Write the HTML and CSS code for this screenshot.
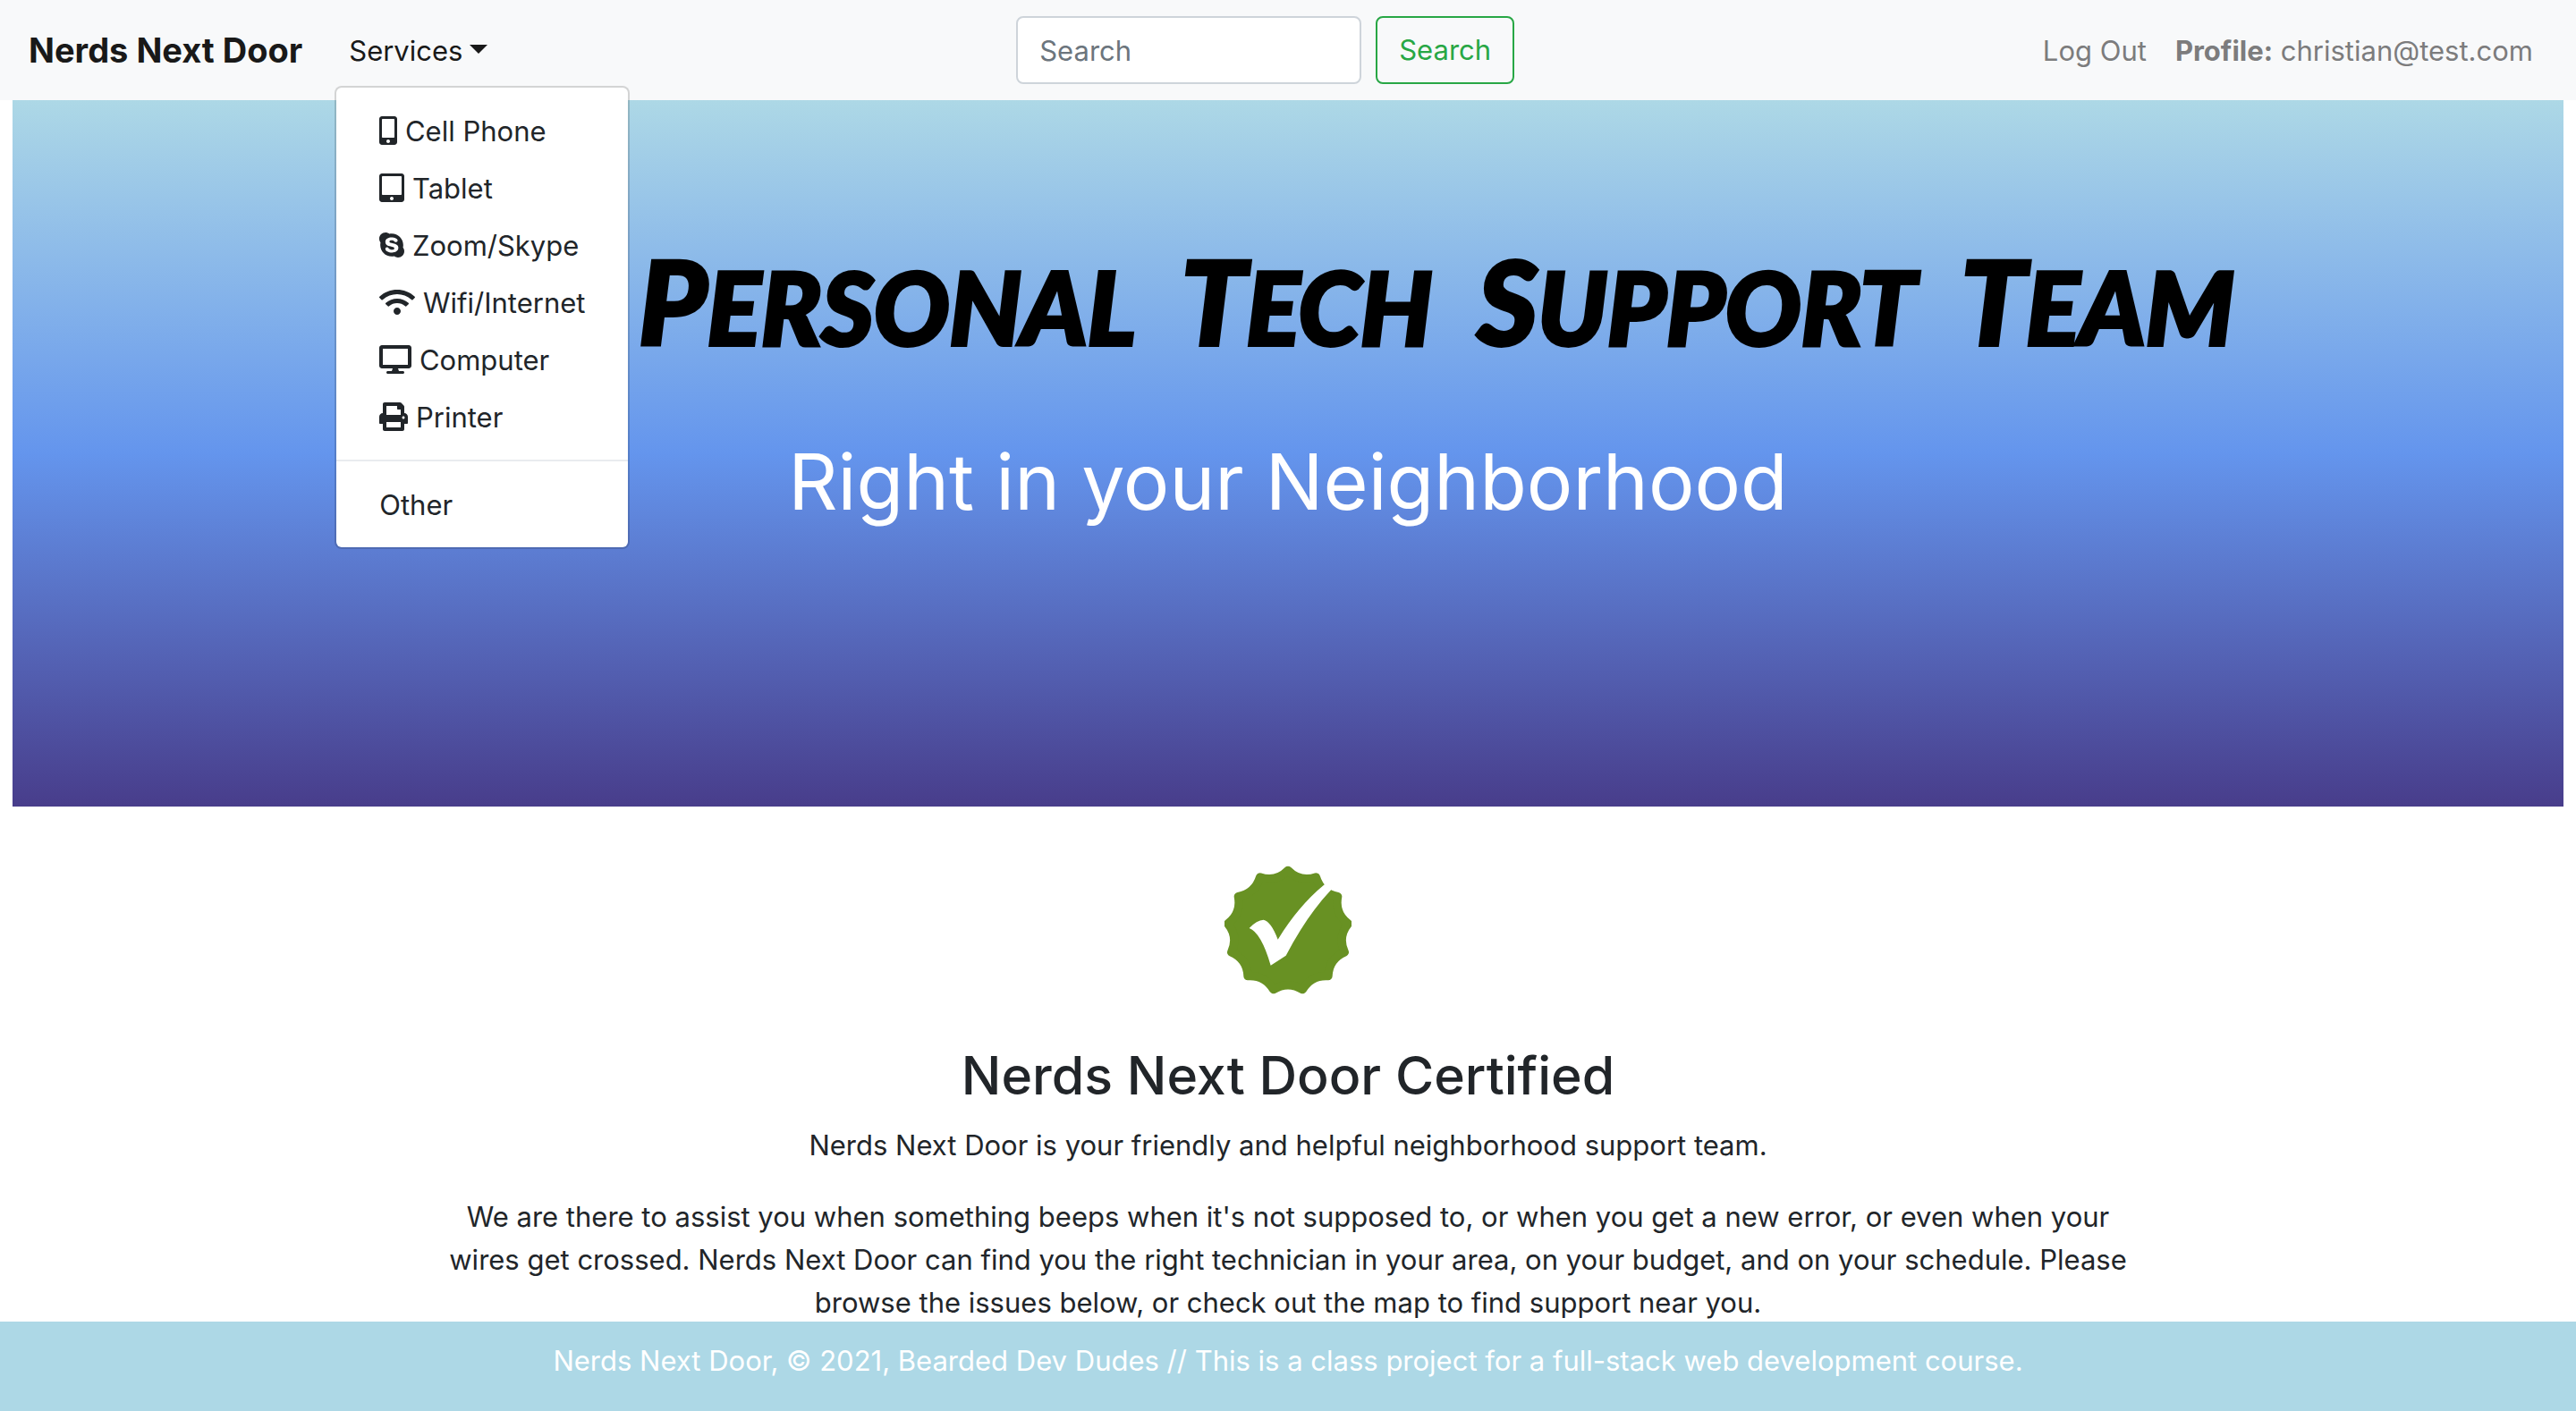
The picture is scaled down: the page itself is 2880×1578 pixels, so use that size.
FILE: index.html
```html
<!DOCTYPE html>
<html lang="en">
<head>
<meta charset="utf-8">
<meta name="viewport" content="width=device-width, initial-scale=1">
<title>Nerds Next Door</title>
<link rel="stylesheet" href="styles.css">
</head>
<body>
<nav class="navbar">
  <div class="nav-group">
    <a class="brand" href="#">Nerds Next Door</a>
    <div class="dropdown">
      <button class="nav-link dropdown-toggle" type="button" aria-expanded="true">Services<span class="caret"></span></button>
      <ul class="dropdown-menu">
        <li><a class="dropdown-item" href="#"><svg class="icon" viewBox="0 0 320 512" aria-hidden="true"><path d="M272 0H48C21.5 0 0 21.5 0 48v416c0 26.500 21.500 48 48 48h224c26.500 0 48-21.500 48-48V48c0-26.500-21.500-48-48-48zM160 480c-17.700 0-32-14.300-32-32s14.300-32 32-32 32 14.300 32 32-14.300 32-32 32zm112-108c0 6.600-5.400 12-12 12H60c-6.600 0-12-5.400-12-12V60c0-6.600 5.400-12 12-12h200c6.600 0 12 5.400 12 12v312z"/></svg> Cell Phone</a></li>
        <li><a class="dropdown-item" href="#"><svg class="icon" viewBox="0 0 448 512" aria-hidden="true"><path d="M400 0H48C21.500 0 0 21.500 0 48v416c0 26.500 21.500 48 48 48h352c26.500 0 48-21.500 48-48V48c0-26.500-21.500-48-48-48zM224 480c-17.700 0-32-14.300-32-32s14.300-32 32-32 32 14.300 32 32-14.300 32-32 32zm176-108c0 6.600-5.400 12-12 12H60c-6.600 0-12-5.400-12-12V60c0-6.600 5.400-12 12-12h328c6.600 0 12 5.400 12 12v312z"/></svg> Tablet</a></li>
        <li><a class="dropdown-item" href="#"><svg class="icon" viewBox="0 0 448 512" aria-hidden="true"><path d="M424.7 299.8c2.900-14 4.700-28.900 4.700-43.800 0-113.500-91.900-205.300-205.300-205.300-14.900 0-29.700 1.700-43.800 4.700C161.300 40.700 137.700 32 112 32 50.200 32 0 82.200 0 144c0 25.700 8.700 49.300 23.300 68.200-2.900 14-4.700 28.900-4.700 43.800 0 113.500 91.900 205.300 205.300 205.300 14.900 0 29.700-1.700 43.800-4.700 19 14.600 42.600 23.300 68.200 23.300 61.800 0 112-50.200 112-112 .1-25.600-8.600-49.200-23.200-68.100zm-194.600 91.500c-65.600 0-120.500-29.200-120.500-65 0-16 9-30.600 29.500-30.600 31.200 0 34.100 44.900 88.100 44.900 25.700 0 42.300-11.400 42.300-26.300 0-18.700-16-21.600-42-28-62.500-15.400-117.800-22-117.800-87.200 0-59.200 58.600-81.100 109.100-81.100 55.100 0 110.800 21.900 110.800 55.400 0 16.900-11.400 31.800-30.300 31.800-28.300 0-29.200-33.500-75-33.500-25.700 0-42 7-42 22.500 0 19.800 20.800 21.800 69.100 33 41.400 9.300 90.700 26.800 90.700 77.600 0 59.100-57.100 86.500-112 86.500z"/></svg> Zoom/Skype</a></li>
        <li><a class="dropdown-item" href="#"><svg class="icon" viewBox="0 0 640 512" aria-hidden="true"><path d="M634.91 154.88C457.74-8.99 182.19-8.93 5.09 154.88c-6.66 6.16-6.79 16.59-.35 22.98l34.24 33.97c6.14 6.1 16.02 6.23 22.4.38 145.92-133.68 371.3-133.71 517.25 0 6.38 5.85 16.26 5.71 22.4-.38l34.24-33.97c6.43-6.39 6.3-16.82-.36-22.98zM320 352c-35.35 0-64 28.65-64 64s28.65 64 64 64 64-28.65 64-64-28.65-64-64-64zm202.67-83.59c-115.26-101.93-290.21-101.82-405.34 0-6.9 6.1-7.12 16.69-.57 23.15l34.44 33.99c6 5.92 15.66 6.32 22.05.8 83.95-72.57 209.74-72.41 293.49 0 6.39 5.52 16.05 5.13 22.05-.8l34.44-33.99c6.56-6.46 6.33-17.06-.56-23.15z"/></svg> Wifi/Internet</a></li>
        <li><a class="dropdown-item" href="#"><svg class="icon" viewBox="0 0 576 512" aria-hidden="true"><path d="M528 0H48C21.5 0 0 21.5 0 48v320c0 26.5 21.5 48 48 48h192l-16 48h-72c-13.3 0-24 10.7-24 24s10.7 24 24 24h272c13.3 0 24-10.7 24-24s-10.7-24-24-24h-72l-16-48h192c26.5 0 48-21.5 48-48V48c0-26.5-21.5-48-48-48zm-16 352H64V64h448v288z"/></svg> Computer</a></li>
        <li><a class="dropdown-item" href="#"><svg class="icon" viewBox="0 0 512 512" aria-hidden="true"><path d="M448 192V77.25c0-8.49-3.37-16.62-9.37-22.63L393.37 9.37c-6-6-14.14-9.37-22.63-9.37H96C78.33 0 64 14.33 64 32v160c-35.35 0-64 28.65-64 64v112c0 8.84 7.16 16 16 16h48v96c0 17.67 14.33 32 32 32h320c17.67 0 32-14.33 32-32v-96h48c8.84 0 16-7.16 16-16V256c0-35.35-28.65-64-64-64zm-64 256H128v-96h256v96zm0-224H128V64h192v48c0 8.84 7.16 16 16 16h48v96zm48 72c-13.25 0-24-10.75-24-24 0-13.26 10.75-24 24-24s24 10.74 24 24c0 13.25-10.75 24-24 24z"/></svg> Printer</a></li>
        <li class="dropdown-divider" role="separator"></li>
        <li><a class="dropdown-item" href="#">Other</a></li>
      </ul>
    </div>
  </div>
  <form class="search">
    <input class="search-input" type="search" placeholder="Search" aria-label="Search">
    <button class="search-button" type="submit">Search</button>
  </form>
  <div class="nav-group">
    <a class="nav-link muted" href="#">Log Out</a>
    <a class="nav-link muted" href="#"><strong>Profile:</strong> christian@test.com</a>
  </div>
</nav>
<header class="hero">
  <h1 class="hero-title"><span class="word">Personal</span> <span class="word">Tech</span> <span class="word">Support</span> <span class="word">Team</span></h1>
  <p class="hero-subtitle">Right in your Neighborhood</p>
</header>
<main class="about">
  <svg class="badge" viewBox="82 85 426 435" role="img" aria-label="Certified">
    <path class="badge-seal" d="M295 101Q335 142 389 124Q406 179 462 189Q451 245 497 280Q461 324 485 376Q432 399 430 456Q373 452 344 501Q295 471 246 501Q217 452 160 456Q158 399 105 376Q129 324 93 280Q139 245 128 189Q184 179 201 124Q255 142 295 101Z"/>
    <path class="badge-check" d="M165 295Q190 268 213 267Q238 272 261 333Q330 220 418 148L440 126L462 150L440 166Q360 250 288 387L237 420Q205 310 165 295Z"/>
  </svg>
  <h2 class="about-title">Nerds Next Door Certified</h2>
  <p class="about-text">Nerds Next Door is your friendly and helpful neighborhood support team.</p>
  <p class="about-text">We are there to assist you when something beeps when it's not supposed to, or when you get a new error, or even when your wires get crossed. Nerds Next Door can find you the right technician in your area, on your budget, and on your schedule. Please browse the issues below, or check out the map to find support near you.</p>
</main>
<footer class="footer">Nerds Next Door, © 2021, Bearded Dev Dudes // This is a class project for a full-stack web development course.</footer>
</body>
</html>
```
FILE: styles.css
```css
* { box-sizing: border-box; }

body {
  margin: 0;
  min-height: 100vh;
  background: #fff;
  color: #212529;
  font-family: Inter, "Liberation Sans", sans-serif;
  font-size: 31px;
  line-height: 48px;
}

a { color: inherit; text-decoration: none; }
button, input { font: inherit; }

.navbar {
  display: flex;
  align-items: center;
  justify-content: space-between;
  padding: 16px 32px;
  height: 112px;
  background: #f8f9fa;
}
.nav-group { display: flex; align-items: center; }
.brand {
  margin-right: 36px;
  font-size: 38px;
  font-weight: 700;
  color: #191919;
}
.nav-link {
  padding: 17px 16px 15px;
  border: 0;
  background: none;
  color: #191919;
  white-space: nowrap;
}
.muted { color: #7c7c7d; }
.muted strong { font-weight: 700; }
.caret {
  display: inline-block;
  margin-left: 8px;
  vertical-align: 8px;
  border-top: 10px solid;
  border-left: 10px solid transparent;
  border-right: 10px solid transparent;
}

.dropdown { position: relative; }
.dropdown-menu {
  position: absolute;
  top: 100%;
  left: 0;
  z-index: 10;
  margin: 0;
  padding: 16px 0;
  list-style: none;
  background: #fff;
  background-clip: padding-box;
  border: 2px solid rgba(0, 0, 0, .15);
  border-radius: 8px;
}
.dropdown-item {
  display: block;
  padding: 9px 48px 7px;
  white-space: nowrap;
}
.dropdown-divider {
  height: 2px;
  margin: 16px 0;
  background: #e9ecef;
}
.icon {
  height: 32px;
  vertical-align: -4px;
  fill: currentColor;
}

.search { display: flex; gap: 16px; }
.search-input {
  width: 386px;
  height: 76px;
  padding: 12px 24px;
  border: 2px solid #ced4da;
  border-radius: 8px;
  background: #fff;
}
.search-input::placeholder { color: #6c757d; opacity: 1; }
.search-button {
  height: 76px;
  padding: 12px 24px;
  border: 2px solid #28a745;
  border-radius: 8px;
  background: none;
  color: #28a745;
}

.hero {
  height: 790px;
  margin: 0 14px;
  padding-top: 156px;
  background: linear-gradient(lightblue, cornflowerblue, darkslateblue);
  text-align: center;
}
.hero-title {
  display: flex;
  justify-content: center;
  gap: 50px;
  margin: 0 0 60px;
  padding-left: 332px;
  color: #000;
  font-family: Lato, "Liberation Sans", sans-serif;
  font-size: 112px;
  font-style: italic;
  font-weight: 900;
  line-height: 136px;
  text-transform: uppercase;
  -webkit-text-stroke: 4px #000;
}
.word { display: block; }
.word::first-letter { font-size: 130px; }
.hero-subtitle {
  margin: 0;
  color: #fff;
  font-size: 86px;
  line-height: 136px;
}

.about {
  display: flex;
  flex-direction: column;
  align-items: center;
  padding: 66px 32px 0;
  text-align: center;
}
.badge { width: 142px; height: 145px; margin-bottom: 52px; }
.badge-seal {
  fill: #689123;
  stroke: #689123;
  stroke-width: 28;
  stroke-linejoin: round;
}
.badge-check { fill: #fff; }
.about-title {
  margin: 0 0 16px;
  font-size: 59px;
  font-weight: 500;
  line-height: 76px;
}
.about-text { max-width: 67%; margin: 0 0 32px; }

.footer {
  position: fixed;
  right: 0;
  bottom: 0;
  left: 0;
  padding: 20px 32px 32px;
  background: lightblue;
  color: #fff;
  text-align: center;
}
```
